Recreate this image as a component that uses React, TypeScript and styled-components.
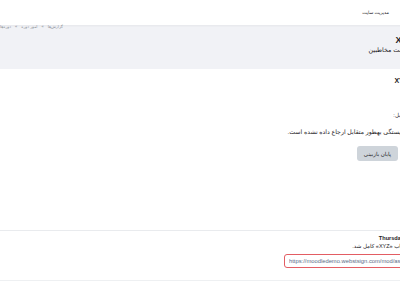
import styled, { createGlobalStyle } from 'styled-components';

const GlobalStyle = createGlobalStyle`
  html, body {
    margin: 0;
    padding: 0;
    overflow: hidden;
    background: #fff;
  }
  body {
    width: 400px;
    height: 284px;
    font-family: 'Liberation Sans', 'DejaVu Sans', sans-serif;
    color: #1d2125;
  }
`;

const Page = styled.div`
  direction: rtl;
  width: 412px;
  height: 284px;
  display: flex;
  flex-direction: column;
`;

const Navbar = styled.header`
  height: 25px;
  flex-shrink: 0;
  display: flex;
  align-items: center;
  padding-right: 23px;
  font-size: 4.6px;
  color: #1d2125;
  box-shadow: 0 1px 2px rgba(0, 0, 0, 0.05);
  position: relative;
  z-index: 1;
`;

const PageHeader = styled.section`
  height: 44px;
  flex-shrink: 0;
  background: #f1f2f6;
  display: flex;
  flex-direction: column;
`;

const Breadcrumb = styled.nav`
  display: flex;
  justify-content: flex-end;
  gap: 4px;
  font-size: 4px;
  line-height: 4px;
  color: #8a9097;
`;

const Heading = styled.h1`
  margin: 6px -1px 0 0;
  font-size: 9px;
  line-height: 10px;
  font-weight: 700;
  direction: ltr;
  text-align: right;
`;

const SubTitle = styled.div`
  margin: 2px -2px 0 0;
  font-size: 6.3px;
  line-height: 6px;
  color: #1d2125;
`;

const Main = styled.main`
  height: 161px;
  flex-shrink: 0;
  display: flex;
  flex-direction: column;
  padding-right: 4px;
  border-bottom: 1px solid #e9ebee;
`;

const SectionTitle = styled.h2`
  margin: 8px 0 0;
  font-size: 7px;
  line-height: 8px;
  font-weight: 700;
  direction: ltr;
  text-align: right;
`;

const Label = styled.div`
  margin-top: 27px;
  font-size: 5.5px;
  line-height: 7px;
`;

const Sentence = styled.p`
  margin: 9px 0 0;
  font-size: 6.2px;
  line-height: 7px;
`;

const ButtonRow = styled.div`
  display: flex;
  margin-top: 11px;
  padding-right: 10px;
`;

const Button = styled.button`
  height: 15px;
  width: 41px;
  padding: 0;
  border: 0;
  border-radius: 3px;
  background: #ced4da;
  color: #1d2125;
  font-family: inherit;
  font-size: 5.5px;
`;

const Timeline = styled.section`
  display: flex;
  flex-direction: column;
  padding: 4px 0 0;
  height: 45px;
  border-bottom: 1px solid #eef0f2;
`;

const DateLine = styled.div`
  font-size: 5.6px;
  line-height: 7px;
  font-weight: 700;
  direction: ltr;
  text-align: right;
  color: #1d2125;
  margin-right: 8px;
`;

const EventLine = styled.div`
  font-size: 5.5px;
  line-height: 7px;
  margin: 1px -11px 0 0;
`;

const TimelineRow = styled.div`
  display: flex;
  justify-content: flex-end;
  margin-top: 4px;
  padding-left: 284px;
`;

const UrlField = styled.input`
  flex-shrink: 0;
  width: 140px;
  height: 14px;
  box-sizing: border-box;
  margin: 0;
  border: 1px solid #e35d63;
  border-radius: 3px;
  direction: ltr;
  padding: 0 4px;
  font-family: inherit;
  font-size: 5.8px;
  color: #5b6b86;
  outline: none;
`;

export default function App() {
  return (
    <>
      <GlobalStyle />
      <Page>
        <Navbar>مدیریت سایت</Navbar>
        <PageHeader>
          <Breadcrumb>
            <span>گزارش‌ها</span>
            <span>»</span>
            <span>امور دوره</span>
            <span>»</span>
            <span>دوره‌ها</span>
          </Breadcrumb>
          <Heading>XYZ</Heading>
          <SubTitle>فهرست مخاطبین</SubTitle>
        </PageHeader>
        <Main>
          <SectionTitle>XYZ</SectionTitle>
          <Label>مقابل:</Label>
          <Sentence>شایستگی بهطور متقابل ارجاع داده نشده است.</Sentence>
          <ButtonRow>
            <Button>پایان بازبینی</Button>
          </ButtonRow>
        </Main>
        <Timeline>
          <DateLine>Thursday</DateLine>
          <EventLine>ارزیابی کتاب «XYZ» کامل شد.</EventLine>
          <TimelineRow>
            <UrlField readOnly value="https://moodledemo.webstsign.com/mod/assign/view.php" />
          </TimelineRow>
        </Timeline>
      </Page>
    </>
  );
}
